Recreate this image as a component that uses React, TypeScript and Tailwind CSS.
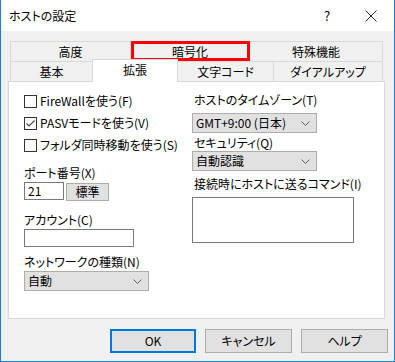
import React from "react";

function Chevron() {
  return (
    <svg width="9" height="5" viewBox="0 0 9 5" className="shrink-0">
      <path d="M0.5 0.5 L4.5 4.5 L8.5 0.5" fill="none" stroke="#606060" strokeWidth="1" />
    </svg>
  );
}

function Select({ value, width }: { value: string; width: string }) {
  return (
    <div
      className={`${width} h-[20px] flex items-center justify-between border border-[#adadad] bg-[#e1e1e1] pl-[3px] pr-[6px] text-[12px] leading-none`}
    >
      <span>{value}</span>
      <Chevron />
    </div>
  );
}

function Check({ label, checked }: { label: string; checked?: boolean }) {
  return (
    <div className="h-[22px] flex items-center gap-[3px]">
      <div className="w-[13px] h-[13px] border border-[#333333] bg-white flex items-center justify-center">
        {checked && (
          <svg width="11" height="11" viewBox="0 0 11 11">
            <path d="M1.5 5.5 L4 8 L9.5 2.5" fill="none" stroke="#444444" strokeWidth="1.1" />
          </svg>
        )}
      </div>
      <span className="text-[12px] leading-4">{label}</span>
    </div>
  );
}

function Btn({ label, primary }: { label: string; primary?: boolean }) {
  return (
    <div
      className={`h-[24px] flex items-center justify-center bg-[#e1e1e1] text-[12px] ${
        primary ? "w-[86px] border-2 border-[#0078d7]" : "w-[87px] border border-[#adadad]"
      }`}
    >
      {label}
    </div>
  );
}

export default function App() {
  return (
    <div className="w-[395px] h-[362px] flex flex-col bg-[#f0f0f0] border-x border-b border-[#1c7fd6] text-black font-['Noto_Sans_CJK_JP','Noto_Sans',sans-serif] [font-feature-settings:'palt']">
      {/* title bar */}
      <div className="h-[31px] shrink-0 bg-white flex items-center pl-[8px] text-[12px]">
        <span>ホストの設定</span>
        <span className="ml-auto mr-[15px] w-[12px] text-center text-[13px]">?</span>
        <div className="w-[46px] flex justify-center">
          <svg width="12" height="12" viewBox="0 0 12 12">
            <path d="M0.5 0.5 L11.5 11.5 M11.5 0.5 L0.5 11.5" stroke="#222" strokeWidth="1" />
          </svg>
        </div>
      </div>

      {/* tabs row 1 */}
      <div className="mt-[10px] ml-[9px] flex h-[20px] text-[12px] leading-none">
        <div className="w-[120px] border-t border-l border-[#d9d9d9] flex items-center justify-center">高度</div>
        <div className="relative w-[119px] border-t border-l border-[#d9d9d9] flex items-center justify-center">
          暗号化
          <div className="absolute -top-[1px] bottom-0 left-0 -right-[1px] border-[3px] border-[#ff0000]" />
        </div>
        <div className="w-[134px] border-t border-x border-[#d9d9d9] flex items-center justify-center">特殊機能</div>
      </div>

      {/* tabs row 2 */}
      <div className="-mt-[2px] ml-[9px] flex items-end h-[22px] text-[12px] leading-none">
        <div className="w-[82px] h-[20px] border-t border-l border-[#d9d9d9] flex items-center justify-center">基本</div>
        <div className="relative z-10 w-[86px] h-[23px] -mb-[1px] bg-white border-t border-x border-[#d9d9d9] flex items-center justify-center pb-[3px]">
          拡張
        </div>
        <div className="w-[95px] h-[20px] border-t border-[#d9d9d9] flex items-center justify-center">文字コード</div>
        <div className="w-[110px] h-[20px] border-t border-x border-[#d9d9d9] flex items-center justify-center">ダイアルアップ</div>
      </div>

      {/* panel */}
      <div className="ml-[7px] w-[377px] h-[238px] bg-white border border-[#d9d9d9] flex text-[12px] leading-4">
        <div className="w-[183px] pl-[15px] pt-[8px] flex flex-col">
          <Check label="FireWallを使う(F)" />
          <Check label="PASVモードを使う(V)" checked />
          <Check label="フォルダ同時移動を使う(S)" />

          <div className="mt-[9px] h-[16px]">ポート番号(X)</div>
          <div className="mt-[1px] flex items-start gap-[2px]">
            <div className="w-[40px] h-[18px] border border-[#7a7a7a] flex items-center pl-[3px]">21</div>
            <div className="mt-[1px] w-[43px] h-[18px] border border-[#adadad] bg-[#e1e1e1] flex items-center justify-center">
              標準
            </div>
          </div>

          <div className="mt-[11px] h-[16px]">アカウント(C)</div>
          <div className="mt-[1px] w-[110px] h-[18px] border border-[#7a7a7a]" />

          <div className="mt-[7px] h-[16px]">ネットワークの種類(N)</div>
          <div className="mt-[1px]">
            <Select value="自動" width="w-[125px]" />
          </div>
        </div>

        <div className="pt-[10px] flex flex-col">
          <div className="h-[16px] pl-[2px]">ホストのタイムゾーン(T)</div>
          <div className="mt-[5px]">
            <Select value="GMT+9:00 (日本)" width="w-[125px]" />
          </div>
          <div className="mt-[2px] h-[16px] pl-[2px]">セキュリティ(Q)</div>
          <div>
            <Select value="自動認識" width="w-[125px]" />
          </div>
          <div className="mt-[5px] h-[16px] pl-[2px]">接続時にホストに送るコマンド(I)</div>
          <div className="mt-[5px] w-[162px] h-[46px] border border-[#7a7a7a]" />
        </div>
      </div>

      {/* buttons */}
      <div className="mt-[10px] flex justify-end gap-[9px] pr-[6px]">
        <Btn label="OK" primary />
        <Btn label="キャンセル" />
        <Btn label="ヘルプ" />
      </div>
    </div>
  );
}
